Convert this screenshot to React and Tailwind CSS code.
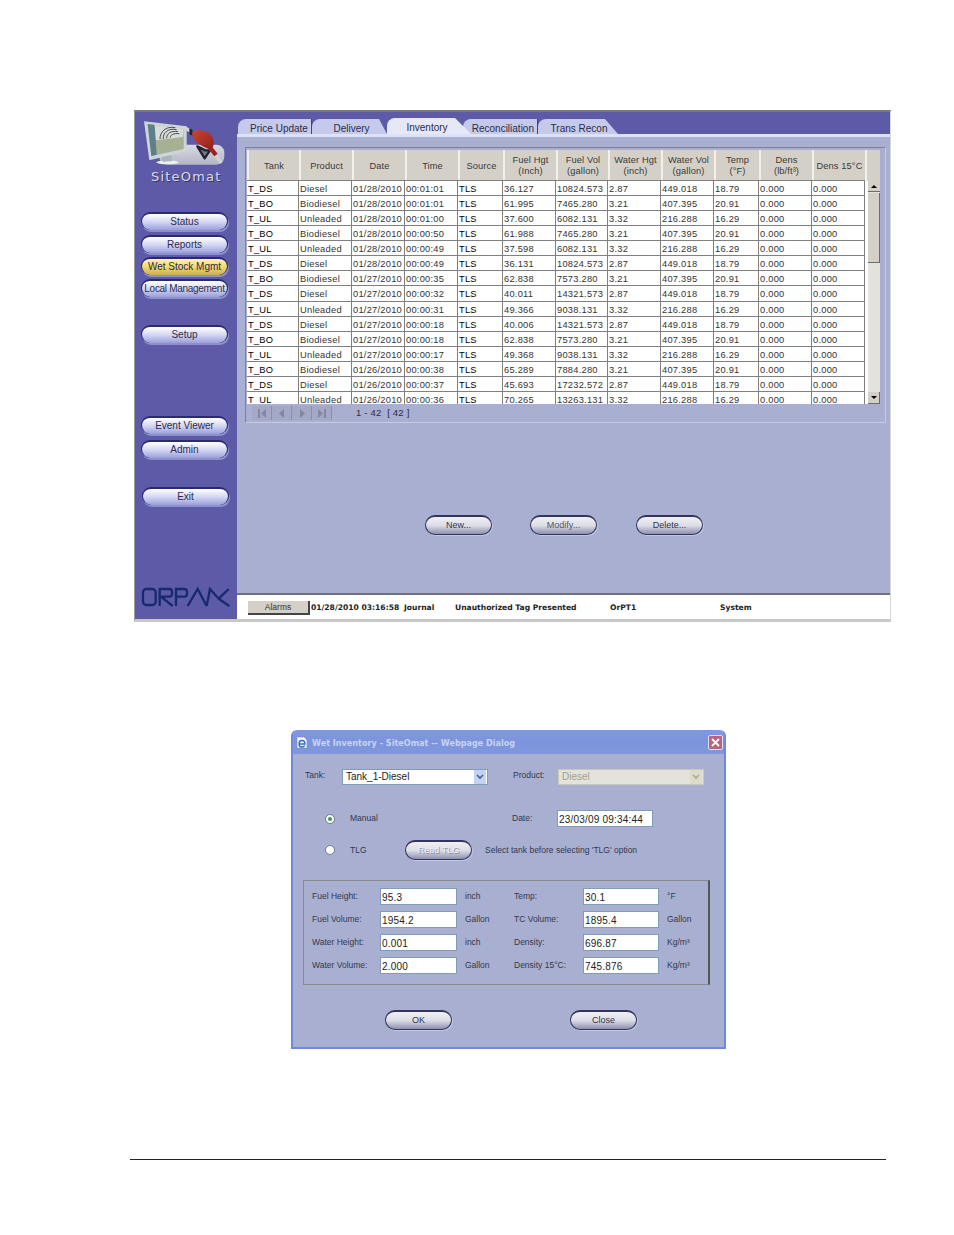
const columns = [
  ["Tank"],
  ["Product"],
  ["Date"],
  ["Time"],
  ["Source"],
  ["Fuel Hgt", "(Inch)"],
  ["Fuel Vol", "(gallon)"],
  ["Water Hgt", "(inch)"],
  ["Water Vol", "(gallon)"],
  ["Temp", "(°F)"],
  ["Dens", "(lb/ft³)"],
  ["Dens 15°C"],
];

const rows = [
  ["T_DS", "Diesel", "01/28/2010", "00:01:01", "36.127", "10824.573", "2.87", "449.018", "18.79"],
  ["T_BO", "Biodiesel", "01/28/2010", "00:01:01", "61.995", "7465.280", "3.21", "407.395", "20.91"],
  ["T_UL", "Unleaded", "01/28/2010", "00:01:00", "37.600", "6082.131", "3.32", "216.288", "16.29"],
  ["T_BO", "Biodiesel", "01/28/2010", "00:00:50", "61.988", "7465.280", "3.21", "407.395", "20.91"],
  ["T_UL", "Unleaded", "01/28/2010", "00:00:49", "37.598", "6082.131", "3.32", "216.288", "16.29"],
  ["T_DS", "Diesel", "01/28/2010", "00:00:49", "36.131", "10824.573", "2.87", "449.018", "18.79"],
  ["T_BO", "Biodiesel", "01/27/2010", "00:00:35", "62.838", "7573.280", "3.21", "407.395", "20.91"],
  ["T_DS", "Diesel", "01/27/2010", "00:00:32", "40.011", "14321.573", "2.87", "449.018", "18.79"],
  ["T_UL", "Unleaded", "01/27/2010", "00:00:31", "49.366", "9038.131", "3.32", "216.288", "16.29"],
  ["T_DS", "Diesel", "01/27/2010", "00:00:18", "40.006", "14321.573", "2.87", "449.018", "18.79"],
  ["T_BO", "Biodiesel", "01/27/2010", "00:00:18", "62.838", "7573.280", "3.21", "407.395", "20.91"],
  ["T_UL", "Unleaded", "01/27/2010", "00:00:17", "49.368", "9038.131", "3.32", "216.288", "16.29"],
  ["T_BO", "Biodiesel", "01/26/2010", "00:00:38", "65.289", "7884.280", "3.21", "407.395", "20.91"],
  ["T_DS", "Diesel", "01/26/2010", "00:00:37", "45.693", "17232.572", "2.87", "449.018", "18.79"],
  ["T_UL", "Unleaded", "01/26/2010", "00:00:36", "70.265", "13263.131", "3.32", "216.288", "16.29"],
];

const gridCols =
  "grid grid-cols-[52px_53px_53px_53px_45px_53px_52px_53px_53px_45px_53px_53px]";

const SideButton = ({ label, className = "", active }) => (
  <div
    className={`flex h-[18px] w-[87px] items-center justify-center rounded-full border-t-2 border-x border-[#2a2a70] border-b-0 text-[10px] leading-none text-[#2c2c50] shadow-[1px_2px_0_#8f8fcb] bg-linear-to-b ${
      active
        ? "from-[#fff3b0] via-[#f3d96b] to-[#c9ad52]"
        : "from-[#ffffff] via-[#d3d6f2] to-[#9a9fdc]"
    } ${className}`}
  >
    {label}
  </div>
);

const GrayPill = ({ label, className = "", tone = "text-[#33334a]" }) => (
  <div
    className={`flex h-[20px] w-[67px] items-center justify-center rounded-full border border-t-2 border-[#34345e] bg-linear-to-b from-[#f0f0f4] via-[#dcdde6] to-[#8e90ae] text-[9px] leading-none shadow-[1px_1px_0_#c3c7e2] ${tone} ${className}`}
  >
    {label}
  </div>
);

const Tab = ({ label, className = "" }) => (
  <div
    className={`flex h-[15px] items-center rounded-tl-lg pt-[4px] text-[10px] leading-none text-[#2c2c44] ${className}`}
  >
    {label}
  </div>
);

const PagerButton = ({ children }) => (
  <div className="flex h-[14px] w-[20px] items-center justify-center border-r border-[#8d8fa8] bg-[#a3a8c6]">
    <svg width="10" height="9" viewBox="0 0 10 9" fill="#85879f">
      {children}
    </svg>
  </div>
);

const SiteOmatLogo = () => (
  <svg width="100" height="56" viewBox="0 0 300 168" className="block">
    <defs>
      <linearGradient id="ped" x1="0" y1="0" x2="0" y2="1">
        <stop offset="0" stopColor="#d9dae6" />
        <stop offset="1" stopColor="#b4b5c4" />
      </linearGradient>
      <linearGradient id="red" x1="0" y1="0" x2="1" y2="1">
        <stop offset="0" stopColor="#cf4433" />
        <stop offset="1" stopColor="#8e1f1a" />
      </linearGradient>
    </defs>
    <rect x="70" y="95" width="195" height="60" rx="24" fill="url(#ped)" />
    <ellipse cx="95" cy="148" rx="34" ry="6" fill="#ecedf1" />
    <polygon points="75,128 105,122 108,144 80,146" fill="#aab4b8" />
    <polygon points="24,25 152,40 152,115 40,142" fill="#ccd5d8" />
    <polygon points="35,33 143,47 143,108 46,129" fill="#a6b094" />
    <polygon points="35,33 56,36 62,125 46,129" fill="#5d8088" />
    <polygon points="56,36 143,47 141,72 60,82" fill="#d8dcd8" />
    <path d="M72 78C72 58 88 38 118 44M82 78C80 60 96 44 122 50M92 76C92 62 104 52 126 56M102 74C104 66 112 60 130 62" fill="none" stroke="#454e52" strokeWidth="3" />
    <path d="M140 46C150 44 156 50 168 56" fill="none" stroke="#d2d2da" strokeWidth="10" />
    <path d="M160 46l10 4v18l-10-4z" fill="#24242e" />
    <path d="M168 60C178 48 204 50 224 64C236 82 236 96 226 112L204 102C186 92 170 82 168 60Z" fill="url(#red)" />
    <polygon points="184,100 208,112 222,112 206,136" fill="#777a86" stroke="#20222e" strokeWidth="7" strokeLinejoin="round" />
    <path d="M226 108L256 150" stroke="#d0d1d8" strokeWidth="11" />
    <path d="M222 104L240 126" stroke="#9a241e" strokeWidth="13" />
  </svg>
);

const OrpakLogo = () => (
  <svg width="100" height="30" viewBox="0 0 300 90" className="block" fill="none" stroke="#172a70" strokeWidth="7">
    <rect x="21" y="27" width="38" height="48" rx="10" />
    <path d="M71 78V27H100Q108 27 108 35V42Q108 50 100 50H75L110 78" />
    <path d="M120 78V27H145Q153 27 153 35V42Q153 50 145 50H122" />
    <path d="M155 78L185 27L212 78" />
    <path d="M212 78L222 27L248 56L278 27M248 56L280 78" />
  </svg>
);

const Sidebar = () => (
  <div className="flex w-[102px] shrink-0 flex-col bg-[#5d5ba8]">
    <div className="ml-[1px] mt-[1px]">
      <SiteOmatLogo />
    </div>
    <p className="mt-[1px] pl-[16px] font-['DejaVu_Sans'] text-[13px] leading-[14px] tracking-[1.2px] text-[#dcdce4] [text-shadow:1px_1px_0_#33336e]">
      SiteOmat
    </p>
    <div className="ml-[6px] mt-[28px] flex flex-col">
      <SideButton label="Status" />
      <SideButton label="Reports" className="mt-[5px]" />
      <SideButton label="Wet Stock Mgmt" active className="mt-[4px]" />
      <SideButton label="Local Management" className="mt-[4px] tracking-[-0.3px]" />
      <SideButton label="Setup" className="mt-[28px]" />
      <SideButton label="Event Viewer" className="mt-[73px]" />
      <SideButton label="Admin" className="mt-[6px]" />
      <SideButton label="Exit" className="mt-[29px] ml-[1px]" />
    </div>
    <div className="mb-[9px] ml-[1px] mt-auto">
      <OrpakLogo />
    </div>
  </div>
);

const Tabs = () => (
  <div className="flex h-[22px] items-end bg-[#5d5ba8] pl-[1px]">
    <Tab label="Price Update" className="w-[74px] justify-center border-r border-[#44446e] bg-[#c5c9ec] pl-[9px]" />
    <Tab label="Delivery" className="w-[75px] justify-center bg-[#c5c9ec] pl-[4px] [clip-path:polygon(0_0,calc(100%-8px)_0,100%_100%,0_100%)]" />
    <Tab label="Inventory" className="relative z-10 h-[16px] w-[84px] justify-center bg-[#e6e8f8] pr-[4px] [clip-path:polygon(0_0,calc(100%-16px)_0,100%_100%,0_100%)]" />
    <Tab label="Reconciliation" className="-ml-[8px] w-[75px] justify-end border-r border-[#44446e] bg-[#c5c9ec] pr-[3px]" />
    <Tab label="Trans Recon" className="w-[80px] justify-center bg-[#c5c9ec] pl-[2px] [clip-path:polygon(0_0,calc(100%-13px)_0,100%_100%,0_100%)]" />
  </div>
);

const Scrollbar = () => (
  <div className="ml-[3px] flex w-[12px] flex-1 flex-col bg-[#e4e2dc] bg-[radial-gradient(#b8b6ae_0.7px,transparent_0.7px)] bg-[length:2px_2px]">
    <div className="flex h-[11px] items-center justify-center border-b border-[#6c6c6c] bg-[#d4d0c8]">
      <div className="h-0 w-0 border-x-[3px] border-b-[3px] border-x-transparent border-b-black" />
    </div>
    <div className="mt-[1px] h-[70px] border-b border-r border-[#6c6c6c] bg-[#d4d0c8]" />
    <div className="mt-auto flex h-[12px] items-center justify-center border-b border-r border-[#6c6c6c] bg-[#d4d0c8]">
      <div className="h-0 w-0 border-x-[3px] border-t-[3px] border-x-transparent border-t-black" />
    </div>
  </div>
);

const InventoryTable = () => (
  <div className="ml-[1px] flex h-[256px] overflow-hidden pt-[2px]">
    <div className="w-[618px]">
      <div className={`${gridCols} h-[31px] border-b border-[#808080] bg-[#d4d0c8]`}>
        {columns.map((col) => (
          <div
            key={col[0]}
            className="flex flex-col items-center justify-center border-l-2 border-[#f2f0ea] pt-[2px] text-[9.3px] leading-[11px] tracking-[0.1px] text-[#3a3a3a]"
          >
            {col.map((line) => (
              <span key={line}>{line}</span>
            ))}
          </div>
        ))}
      </div>
      {rows.map((row, i) => (
        <div
          key={i}
          className={`${gridCols} h-[15.07px] border-b border-[#808080] bg-white text-[9.3px] leading-[16px] text-[#333]`}
        >
          {[row[0], row[1], row[2], row[3], "TLS", row[4], row[5], row[6], row[7], row[8], "0.000", "0.000"].map(
            (cell, j) => (
              <div
                key={j}
                className={`overflow-hidden whitespace-nowrap border-r border-[#808080] pl-[1px] tracking-[0.25px] ${
                  j === 0 || j === 4 ? "text-black" : ""
                }`}
              >
                {cell}
              </div>
            )
          )}
        </div>
      ))}
    </div>
    <div className="flex w-[15px] flex-col bg-white">
      <div className="h-[31px] border-l-2 border-[#f2f0ea] bg-[#d4d0c8]" />
      <Scrollbar />
    </div>
  </div>
);

const Pager = () => (
  <div className="flex h-[18px] items-center pl-[6px]">
    <PagerButton>
      <rect x="1" y="0" width="2" height="9" />
      <polygon points="9,0 4,4.5 9,9" />
    </PagerButton>
    <PagerButton>
      <polygon points="7,0 2,4.5 7,9" />
    </PagerButton>
    <PagerButton>
      <polygon points="3,0 8,4.5 3,9" />
    </PagerButton>
    <PagerButton>
      <polygon points="1,0 6,4.5 1,9" />
      <rect x="7" y="0" width="2" height="9" />
    </PagerButton>
    <span className="ml-[24px] text-[9.5px] leading-none tracking-[0.2px] text-[#2c2c44]">
      1 - 42&nbsp; [ 42 ]
    </span>
  </div>
);

const AlarmBar = () => (
  <div className="flex h-[26px] items-center border-t-2 border-[#6f7180] bg-white pl-[11px] pt-[1px] font-['DejaVu_Sans'] text-[7.6px] font-bold leading-none text-[#222]">
    <div className="flex h-[14px] w-[62px] items-center justify-center border-r-2 border-b-2 border-[#444] bg-[#d4d0c8] pt-[1px] font-['Liberation_Sans'] text-[8.5px] font-normal text-[#333]">
      Alarms
    </div>
    <span className="ml-[1px] w-[93px] whitespace-nowrap">01/28/2010 03:16:58</span>
    <span className="w-[51px]">Journal</span>
    <span className="w-[155px] whitespace-nowrap">Unauthorized Tag Presented</span>
    <span className="w-[110px]">OrPT1</span>
    <span>System</span>
  </div>
);

const MainWindow = () => (
  <div className="ml-[134px] flex h-[512px] w-[757px] border border-t-2 border-b-[3px] border-l-[#9a9a9a] border-r-[#d8d8d8] border-t-[#77777f] border-b-[#c8c8c8]">
    <Sidebar />
    <div className="flex min-w-0 flex-1 flex-col">
      <Tabs />
      <div className="h-[3px] bg-[#dfe2f6]" />
      <div className="flex flex-1 flex-col bg-[#a9afd0]">
        <div className="ml-[8px] mr-[4px] mt-[10px] border border-[#c8cbdc] border-l-[#7d8098] border-t-[#7d8098]">
          <InventoryTable />
          <Pager />
        </div>
        <div className="mt-[92px] flex pl-[188px]">
          <GrayPill label="New..." />
          <GrayPill label="Modify..." tone="text-[#55556a]" className="ml-[38px]" />
          <GrayPill label="Delete..." className="ml-[39px]" />
        </div>
        <div className="mt-auto">
          <AlarmBar />
        </div>
      </div>
    </div>
  </div>
);

const Label = ({ children, className = "" }) => (
  <span className={`whitespace-nowrap text-[8.5px] leading-none text-[#33384e] ${className}`}>
    {children}
  </span>
);

const Input = ({ value, className = "" }) => (
  <div className={`h-[17px] border border-[#7f9db9] bg-white pl-[1px] text-[10px] leading-[17px] tracking-[0.2px] text-[#222] ${className}`}>
    {value}
  </div>
);

const Select = ({ value, disabled, className = "" }) => (
  <div className={`flex h-[16px] items-center justify-between border pl-[3px] pr-[1px] text-[10px] leading-none ${
      disabled ? "border-[#c9c7ba] bg-[#e4e3da] text-[#a09f94]" : "border-[#7f9db9] bg-white text-[#222]"
    } ${className}`}>
    {value}
    <div className={`flex h-[14px] w-[12px] items-center justify-center ${disabled ? "bg-[#dedbcb]" : "bg-[#c3d3f5]"}`}>
      <svg width="8" height="6" viewBox="0 0 8 6" fill="none" stroke={disabled ? "#a9a89a" : "#4d6185"} strokeWidth="1.6">
        <path d="M1 1l3 3 3-3" />
      </svg>
    </div>
  </div>
);

const Radio = ({ checked }) => (
  <div className="flex h-[10px] w-[10px] items-center justify-center rounded-full border border-[#6e7a90] bg-white">
    {checked && <div className="h-[4px] w-[4px] rounded-full bg-[#3b9a4a]" />}
  </div>
);

const FieldRow = ({ left, leftValue, leftUnit, right, rightValue, rightUnit, className = "" }) => (
  <div className={`flex h-[17px] items-center ${className}`}>
    <Label className="w-[68px]">{left}</Label>
    <Input value={leftValue} className="w-[77px]" />
    <Label className="ml-[8px] w-[49px]">{leftUnit}</Label>
    <Label className="w-[69px]">{right}</Label>
    <Input value={rightValue} className="w-[76px]" />
    <Label className="ml-[8px]">{rightUnit}</Label>
  </div>
);

const Dialog = () => (
  <div className="ml-[291px] mt-[108px] h-[319px] w-[435px] rounded-t-md border-x-2 border-b-2 border-[#6d8ade] bg-[#a9afd0]">
    <div className="flex h-[24px] items-center rounded-t-md bg-linear-to-b from-[#7f98e2] via-[#7b94dc] to-[#7f98dc] pl-[3px] pr-[1px]">
      <svg width="12" height="13" viewBox="0 0 12 13">
        <path d="M1 1h7l3 3v8H1z" fill="#f4f4f4" stroke="#8890a8" strokeWidth="0.6" />
        <path d="M3 8h6C9 5.5 7.6 4.5 6 4.5S3 6 3 8s1.4 3 3 3c1.2 0 2.2-.5 2.7-1.5" fill="none" stroke="#2a6fd0" strokeWidth="1.3" />
      </svg>
      <span className="ml-[4px] pt-[2px] font-['DejaVu_Sans'] text-[8.1px] font-bold leading-none text-[#c9d3f2]">
        Wet Inventory - SiteOmat -- Webpage Dialog
      </span>
      <div className="ml-auto flex h-[15px] w-[15px] items-center justify-center rounded-[2px] border border-[#d9dff4] bg-[#b9657e]">
        <svg width="9" height="9" viewBox="0 0 9 9" stroke="#fff" strokeWidth="1.8">
          <path d="M1 1l7 7M8 1L1 8" />
        </svg>
      </div>
    </div>

    <div className="ml-[12px] mt-[15px] flex items-center">
      <Label className="-mt-[4px] w-[37px]">Tank:</Label>
      <Select value="Tank_1-Diesel" className="w-[146px]" />
      <Label className="-mt-[4px] ml-[25px] w-[45px]">Product:</Label>
      <Select value="Diesel" disabled className="w-[146px]" />
    </div>

    <div className="mt-[25px] flex items-center pl-[32px]">
      <Radio checked />
      <Label className="ml-[15px] w-[162px]">Manual</Label>
      <Label className="w-[45px]">Date:</Label>
      <Input value="23/03/09 09:34:44" className="w-[96px]" />
    </div>

    <div className="mt-[13px] flex items-center pl-[32px]">
      <Radio />
      <Label className="ml-[15px] w-[55px]">TLG</Label>
      <GrayPill label="Read TLG" tone="text-[#eeeef2] [text-shadow:1px_1px_0_#8e90a4]" />
      <Label className="ml-[13px]">Select tank before selecting 'TLG' option</Label>
    </div>

    <div className="ml-[10px] mt-[20px] h-[105px] w-[407px] border border-[#8a8a8a] border-r-2 border-r-[#555] pl-[8px] pt-[7px]">
      <FieldRow left="Fuel Height:" leftValue="95.3" leftUnit="inch" right="Temp:" rightValue="30.1" rightUnit="°F" />
      <FieldRow left="Fuel Volume:" leftValue="1954.2" leftUnit="Gallon" right="TC Volume:" rightValue="1895.4" rightUnit="Gallon" className="mt-[6px]" />
      <FieldRow left="Water Height:" leftValue="0.001" leftUnit="inch" right="Density:" rightValue="696.87" rightUnit="Kg/m³" className="mt-[6px]" />
      <FieldRow left="Water Volume:" leftValue="2.000" leftUnit="Gallon" right="Density 15°C:" rightValue="745.876" rightUnit="Kg/m³" className="mt-[6px]" />
    </div>

    <div className="mt-[25px] flex pl-[92px]">
      <GrayPill label="OK" />
      <GrayPill label="Close" className="ml-[118px]" />
    </div>
  </div>
);

export default function App() {
  return (
    <div className="h-[1235px] w-[954px] overflow-hidden bg-white pt-[110px] font-['Liberation_Sans',sans-serif]">
      <MainWindow />
      <Dialog />
      <div className="ml-[130px] mt-[110px] h-px w-[756px] bg-[#222]" />
    </div>
  );
}
